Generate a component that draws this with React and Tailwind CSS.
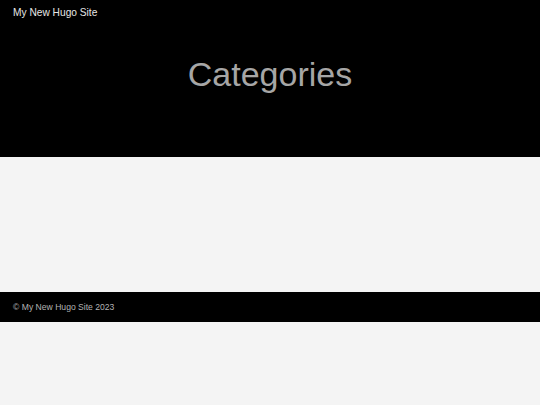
export default function App() {
  return (
    <div className="min-h-[405px] bg-[#f4f4f4] font-['Liberation_Sans',Arial,sans-serif]">
      {/* Header */}
      <header className="bg-black h-[157px] flex flex-col">
        <nav className="px-[13px] pt-[6px]">
          <a className="block text-[10.2px] text-[#e6e6e6] leading-[14px]">My New Hugo Site</a>
        </nav>
        <div className="flex justify-center pt-[34px]">
          <h1 className="text-[34px] text-[#a6a6a6] leading-[40px] font-normal">Categories</h1>
        </div>
      </header>

      {/* Main */}
      <main className="h-[135px]"></main>

      {/* Footer */}
      <footer className="bg-black h-[30px] flex items-center px-[13px]">
        <span className="text-[8.6px] text-[#b3b3b3]">© My New Hugo Site 2023</span>
      </footer>
    </div>
  )
}
